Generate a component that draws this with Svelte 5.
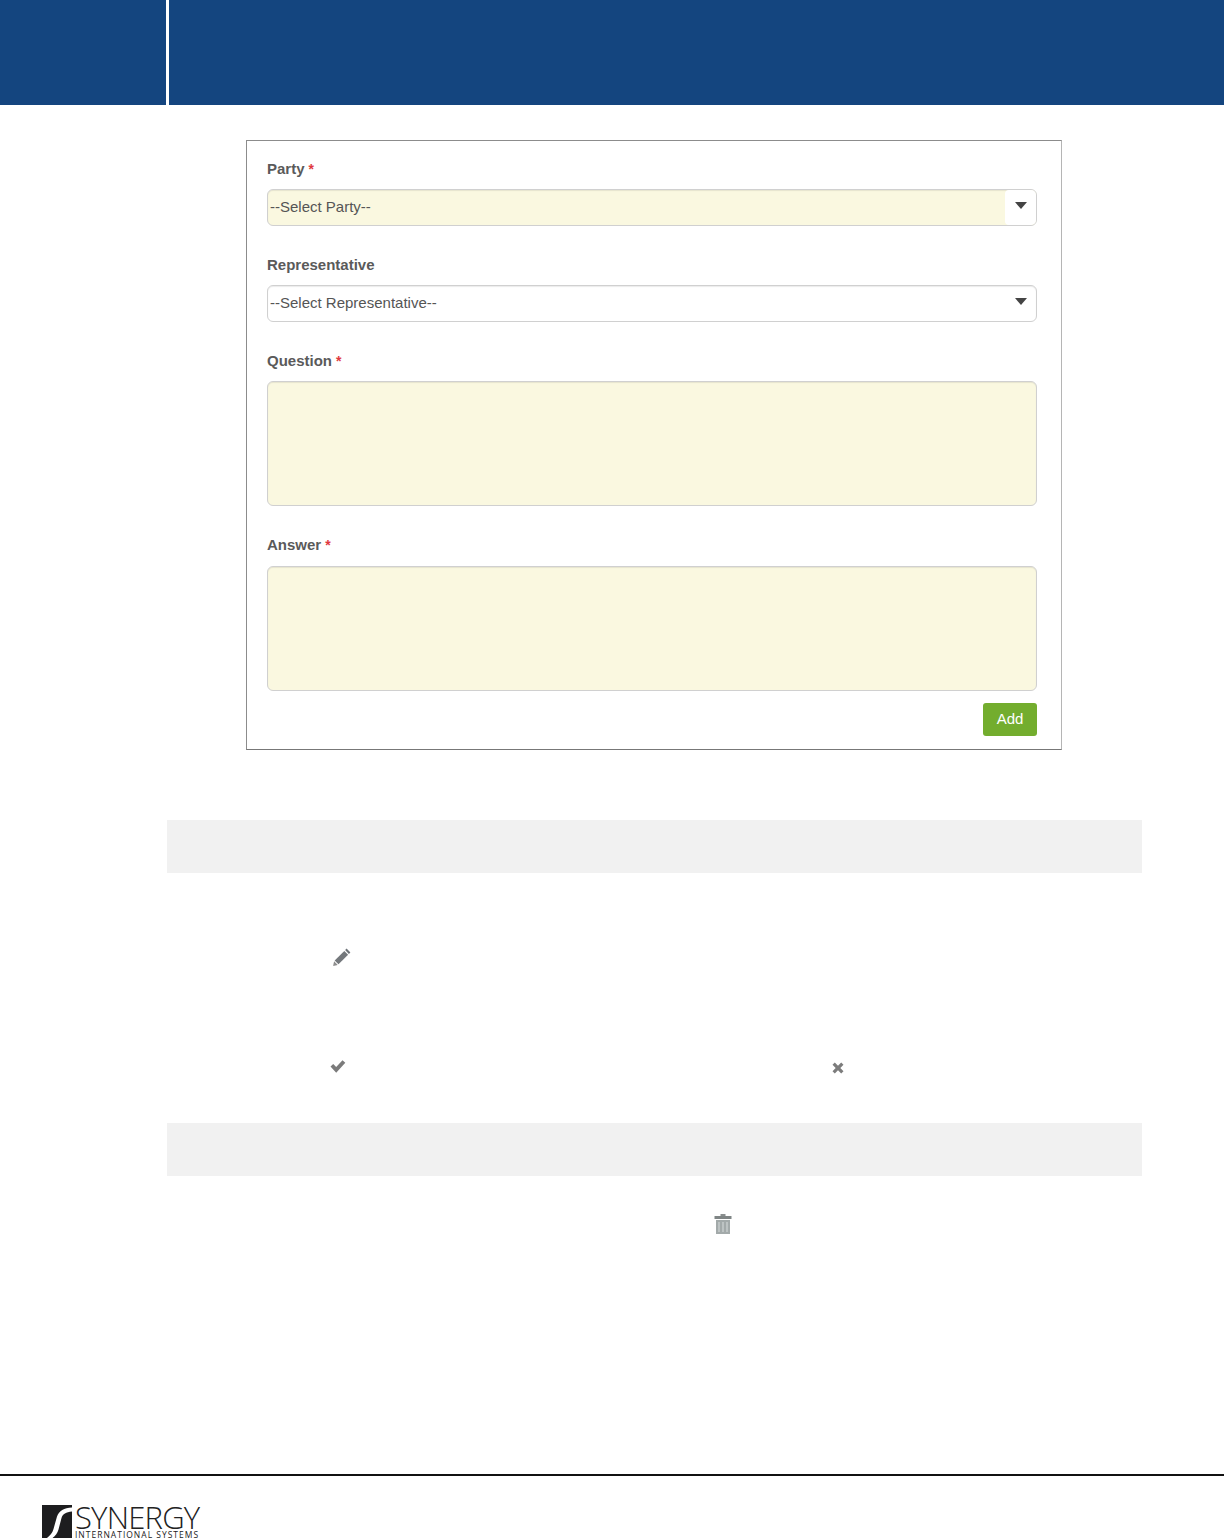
<script>
	const fields = [
		{label: 'Party', required: true, kind: 'choice', placeholder: '--Select Party--'},
		{label: 'Representative', required: false, kind: 'choice', placeholder: '--Select Representative--'},
		{label: 'Question', required: true, kind: 'text'},
		{label: 'Answer', required: true, kind: 'text'}
	]
</script>

<div class="page">
	<header>
		<div class="head-left"></div>
		<div class="head-right"></div>
	</header>

	<section class="card">
		{#each fields as field (field.label)}
			<div class="field {field.kind}">
				<div class="label">
					{field.label}{#if field.required}<span class="req">*</span>{/if}
				</div>
				{#if field.kind === 'choice'}
					<div class="select" class:required={field.required}>
						<span class="value">{field.placeholder}</span>
						<span class="caret"><span class="arrow"></span></span>
					</div>
				{:else}
					<div class="area"></div>
				{/if}
			</div>
		{/each}
		<div class="actions">
			<button>Add</button>
		</div>
	</section>

	<div class="bar first"></div>

	<div class="icon-row pencil-row">
		<svg width="22" height="22" viewBox="0 0 22 22">
			<path d="M15.6 2.6l3.8 3.8-1.5 1.5-3.8-3.800z" fill="#6e7378" />
			<path d="M13.300 4.900l3.800 3.800-9.600 9.600-3.800-3.800z" fill="#74787c" />
			<path d="M3.100 15.300l3.600 3.600-4.600 1z" fill="#8d8d8d" />
		</svg>
	</div>

	<div class="icon-row check-row">
		<svg class="check" width="20" height="18" viewBox="0 0 20 18">
			<path d="M2.500 9.500l2.700-2.500 3 3 6.300-6.800 2.800 2.500-9.100 10z" fill="#7b7b7b" />
		</svg>
		<svg class="cross" width="14" height="14" viewBox="0 0 14 14">
			<path d="M3.800 1.500L7 4.700l3.200-3.200 2.300 2.300L9.300 7l3.200 3.200-2.300 2.300L7 9.300l-3.200 3.200-2.300-2.300L4.700 7 1.500 3.800z" fill="#7c7c7c" />
		</svg>
	</div>

	<div class="bar second"></div>

	<div class="icon-row trash-row">
		<svg width="20" height="22" viewBox="0 0 20 22">
			<rect x="7.500" y="1" width="5" height="2" fill="#8a8f8f" />
			<rect x="1.500" y="3" width="17" height="3" fill="#7f8585" />
			<path d="M3 7h14v14H3z" fill="#a3aaaa" />
			<path d="M6 9v10M10 9v10M14 9v10" stroke="#cfd4d4" stroke-width="1.200" />
		</svg>
	</div>

	<footer>
		<div class="logo">
			<svg class="mark" width="30" height="33" viewBox="0 0 30 33">
				<path d="M0 0H30V2.500C22 3 17 5.500 15 11.500L11.500 24C10.500 28 8 30.500 5 33H0z" fill="#1d1d1f" />
				<path d="M30 6.500V33H10.500C13.500 31 15.500 28 16.500 24.500L19.500 13C20.800 9 24 7 30 6.500z" fill="#1d1d1f" />
			</svg>
			<div class="logo-text">
				<div class="name">SYNERGY</div>
				<div class="sub">INTERNATIONAL SYSTEMS</div>
			</div>
		</div>
	</footer>
</div>

<style>
	:global(body) {
		background: #fff;
	}

	.page {
		width: 1224px;
		height: 1538px;
		overflow: hidden;
		font-family: 'Liberation Sans', Arial, sans-serif;
	}

	header {
		display: flex;
		gap: 3px;
		height: 105px;
	}

	.head-left {
		width: 166px;
		background: #14457f;
	}

	.head-right {
		flex: 1;
		background: #14457f;
	}

	.card {
		box-sizing: border-box;
		width: 816px;
		height: 610px;
		margin: 35px 0 0 246px;
		padding: 20px 24px 0 20px;
		border: 1px solid #8c8c8c;
		border-right-color: #b5b5b5;
		border-bottom-color: #777;
	}

	.field {
		margin-bottom: 31px;
	}

	.field.text {
		margin-bottom: 12px;
	}

	.field.text:nth-child(3) {
		margin-bottom: 31px;
	}

	.field.text:nth-child(4) .label {
		margin-bottom: 13px;
	}

	.label {
		height: 16px;
		margin-bottom: 12px;
		font-size: 15px;
		font-weight: bold;
		line-height: 16px;
		color: #5a5a5a;
	}

	.req {
		margin-left: 4px;
		font-size: 14px;
		color: #e0393e;
	}

	.select {
		box-sizing: border-box;
		display: flex;
		align-items: stretch;
		justify-content: space-between;
		height: 37px;
		padding-left: 2px;
		border: 1px solid #d0d0d0;
		border-radius: 6px;
		box-shadow: inset 0 1px 1px rgba(0, 0, 0, 0.08);
		font-size: 15px;
		line-height: 34px;
		color: #555;
	}

	.select.required {
		background: #faf8e0;
	}

	.caret {
		display: flex;
		align-items: flex-start;
		justify-content: flex-end;
		width: 31px;
		padding: 12px 9px 0 0;
		box-sizing: border-box;
		border-radius: 4px 5px 5px 4px;
		background: #fff;
	}

	.select:not(.required) .caret {
		background: transparent;
	}

	.arrow {
		width: 0;
		height: 0;
		border-top: 7px solid #444;
		border-left: 6.500px solid transparent;
		border-right: 6.500px solid transparent;
	}

	.area {
		box-sizing: border-box;
		height: 125px;
		border: 1px solid #d0d0d0;
		border-radius: 6px;
		background: #faf8e0;
		box-shadow: inset 0 1px 1px rgba(0, 0, 0, 0.08);
	}

	.actions {
		display: flex;
		justify-content: flex-end;
	}

	button {
		width: 54px;
		height: 33px;
		padding: 0 0 2px;
		border: none;
		border-radius: 3px;
		background: #73ad2e;
		font-family: inherit;
		font-size: 15px;
		color: #fff;
	}

	.bar {
		width: 975px;
		height: 53px;
		margin-left: 167px;
		background: #f1f1f1;
	}

	.bar.first {
		margin-top: 70px;
	}

	.icon-row {
		display: flex;
		align-items: flex-start;
	}

	.icon-row svg {
		filter: blur(0.4px);
	}

	.pencil-row {
		height: 73px;
		padding: 73px 0 0 331px;
	}

	.check-row {
		height: 66px;
		padding: 38px 0 0 328px;
	}

	.cross {
		margin: 4px 0 0 483px;
	}

	.trash-row {
		height: 37px;
		padding: 37px 0 0 713px;
	}

	footer {
		box-sizing: border-box;
		height: 64px;
		margin-top: 224px;
		padding: 29px 0 0 42px;
		border-top: 2px solid #111;
	}

	.logo {
		display: flex;
		gap: 3px;
		color: #222;
	}

	.logo-text {
		display: flex;
		flex-direction: column;
	}

	.name {
		height: 24px;
		font-family: 'Open Sans', sans-serif;
		font-weight: 300;
		font-size: 31px;
		line-height: 24px;
		letter-spacing: -0.8px;
	}

	.sub {
		height: 7px;
		margin-top: 2px;
		font-family: 'Open Sans', sans-serif;
		font-weight: 400;
		font-size: 8.500px;
		line-height: 7px;
		letter-spacing: 1px;
		white-space: nowrap;
	}
</style>
